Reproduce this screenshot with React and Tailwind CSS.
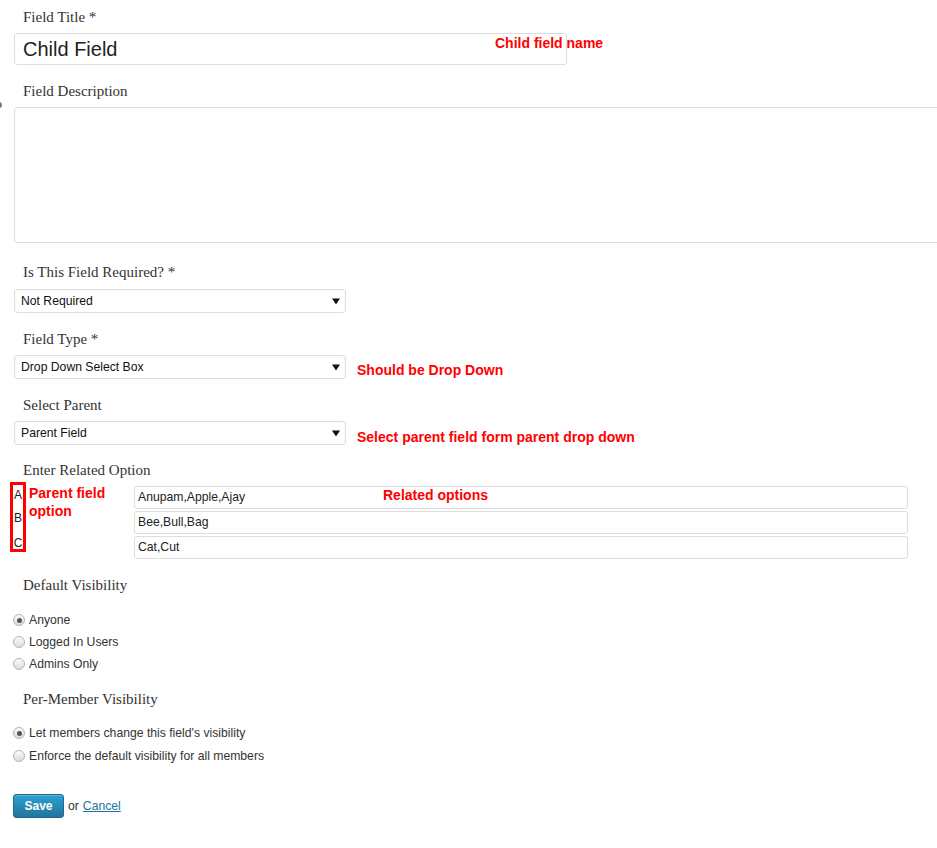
import React from "react";

const serif = "font-['Liberation_Serif',serif]";
const sans = "font-['Liberation_Sans',Arial,sans-serif]";

const Label = ({ children, className = "" }) => (
  <div className={`${serif} text-[15px] leading-[20px] text-[#333] pl-[23px] ${className}`}>
    {children}
  </div>
);

const Note = ({ children, className = "" }) => (
  <span className={`${sans} text-[14px] font-bold text-[#ff0000] leading-[17px] whitespace-nowrap ${className}`}>
    {children}
  </span>
);

const Select = ({ value }) => (
  <div className="flex items-center justify-between w-[332px] h-[24px] border border-[#ddd] rounded-[3px] bg-white pl-[6px] pr-[5px] shadow-[inset_0_1px_2px_rgba(0,0,0,0.04)]">
    <span className={`${sans} text-[12.2px] text-[#111]`}>{value}</span>
    <svg width="8" height="7" viewBox="0 0 8 7">
      <path d="M0 0.5 H8 L4 6.5 Z" fill="#111" />
    </svg>
  </div>
);

const Radio = ({ checked, label }) => (
  <div className="flex items-center h-[22px] pl-[13px]">
    <span className="relative w-[12px] h-[12px] rounded-full border border-[#b4b4b4] bg-gradient-to-b from-[#fbfbfb] to-[#dcdcdc] flex items-center justify-center">
      {checked && <span className="w-[5px] h-[5px] rounded-full bg-[#555]" />}
    </span>
    <span className={`${sans} text-[12.2px] text-[#333] ml-[4px]`}>{label}</span>
  </div>
);

const RelatedInput = ({ value, children }) => (
  <div className="relative flex items-center w-[774px] h-[23px] border border-[#ddd] rounded-[3px] bg-white pl-[3px]">
    <span className={`${sans} text-[12.2px] text-[#222]`}>{value}</span>
    {children}
  </div>
);

export default function App() {
  return (
    <div className="relative w-[937px] h-[848px] bg-white overflow-hidden">
      <span className="absolute left-[-4px] top-[102px] w-[6px] h-[6px] rounded-full bg-[#777]" />

      <Label className="pt-[7px]">Field Title *</Label>
      <div className="flex items-center mt-[6px]">
        <div className="ml-[14px] w-[553px] h-[32px] border border-[#ddd] rounded-[3px] flex items-center pl-[8px] relative">
          <span className={`${sans} text-[20px] text-[#222]`}>Child Field</span>
          <Note className="absolute left-[480px] top-[1px]">Child field name</Note>
        </div>
      </div>

      <Label className="mt-[16px]">Field Description</Label>
      <div className="ml-[14px] mt-[6px] w-[940px] h-[136px] border border-[#ddd] rounded-[3px]" />

      <Label className="mt-[19px]">Is This Field Required? *</Label>
      <div className="ml-[14px] mt-[7px]">
        <Select value="Not Required" />
      </div>

      <Label className="mt-[16px]">Field Type *</Label>
      <div className="ml-[14px] mt-[6px] flex items-center gap-[11px]">
        <Select value="Drop Down Select Box" />
        <Note className="relative top-[3px]">Should be Drop Down</Note>
      </div>

      <Label className="mt-[16px]">Select Parent</Label>
      <div className="ml-[14px] mt-[6px] flex items-center gap-[11px]">
        <Select value="Parent Field" />
        <Note className="relative top-[4px]">Select parent field form parent drop down</Note>
      </div>

      <Label className="mt-[15px]">Enter Related Option</Label>
      <div className="flex mt-[2px] ml-[10px]">
        <div className={`${sans} w-[16px] h-[70px] border-[3px] border-[#ff0000] flex flex-col items-center text-[12px] text-[#222]`}>
          <span className="leading-[20px]">A</span>
          <span className="leading-[26px]">B</span>
          <span className="leading-[24px]">C</span>
        </div>
        <div className="ml-[3px] mt-[2px] w-[100px]">
          <Note className="block leading-[18px]">Parent field</Note>
          <Note className="block leading-[18px]">option</Note>
        </div>
        <div className="ml-[5px] mt-[4px] flex flex-col gap-[2px]">
          <RelatedInput value="Anupam,Apple,Ajay">
            <Note className="absolute left-[248px] top-[0px]">Related options</Note>
          </RelatedInput>
          <RelatedInput value="Bee,Bull,Bag" />
          <RelatedInput value="Cat,Cut" />
        </div>
      </div>

      <Label className="mt-[16px]">Default Visibility</Label>
      <div className="mt-[14px]">
        <Radio checked label="Anyone" />
        <Radio label="Logged In Users" />
        <Radio label="Admins Only" />
      </div>

      <Label className="mt-[14px]">Per-Member Visibility</Label>
      <div className="mt-[13px] flex flex-col gap-[1px]">
        <Radio checked label="Let members change this field's visibility" />
        <Radio label="Enforce the default visibility for all members" />
      </div>

      <div className={`${sans} mt-[27px] ml-[13px] flex items-center gap-[4px] text-[12.2px]`}>
        <button className="w-[51px] h-[24px] rounded-[3px] border border-[#1e6a8d] bg-gradient-to-b from-[#2e9fd2] to-[#21759b] text-white font-bold text-[12px] shadow-[inset_0_1px_0_rgba(120,200,230,0.5)]">
          Save
        </button>
        <span className="text-[#333]">or</span>
        <a href="#" className="text-[#21759b] underline">Cancel</a>
      </div>
    </div>
  );
}
